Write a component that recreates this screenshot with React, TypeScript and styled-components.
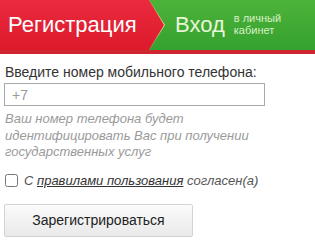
import styled, { createGlobalStyle } from 'styled-components';

const GlobalStyle = createGlobalStyle`
	body {
		margin: 0;
		background: #fff;
		font-family: 'Liberation Sans', Arial, sans-serif;
	}
`;

const Page = styled.div`
	width: 315px;
`;

const Header = styled.header`
	display: flex;
	height: 50px;
	border-bottom: 4px solid #cf2530;
	box-shadow: inset 0 -1px 0 #d9c46a;
`;

const RegisterTab = styled.div`
	position: relative;
	width: 149px;
	display: flex;
	align-items: center;
	padding-left: 8px;
	box-sizing: border-box;
	background: linear-gradient(#ea2a3d, #dc1a2c);
	color: #fff;
	font-size: 22px;
	z-index: 1;
	&::after {
		content: '';
		position: absolute;
		top: 0;
		right: -15px;
		width: 15px;
		height: 50px;
		background: linear-gradient(#ea2a3d, #dc1a2c);
		clip-path: polygon(0 0, 100% 50%, 0 100%);
	}
	&::before {
		content: '';
		position: absolute;
		top: 0;
		right: -16px;
		width: 16px;
		height: 50px;
		background: #e2d98a;
		clip-path: polygon(0 0, 100% 50%, 0 100%);
	}
`;

const LoginTab = styled.div`
	flex: 1;
	display: flex;
	align-items: center;
	gap: 9px;
	padding-left: 26px;
	background: linear-gradient(#4db33a, #35a12f);
	color: #e8f6d8;
`;

const LoginTitle = styled.span`
	font-size: 22px;
`;

const LoginNote = styled.span`
	font-size: 11px;
	line-height: 12px;
	color: #d8efc6;
	margin-top: -2px;
`;

const Form = styled.form`
	padding: 10px 4px 0 4px;
	display: flex;
	flex-direction: column;
`;

const Label = styled.label`
	font-size: 14px;
	color: #333;
	line-height: 16px;
	padding-left: 1px;
`;

const PhoneInput = styled.input`
	margin-top: 3px;
	width: 261px;
	height: 23px;
	box-sizing: border-box;
	border: 1px solid #a9a9a9;
	padding: 0 7px;
	font-family: inherit;
	font-size: 14px;
	color: #333;
	outline: none;
	&::placeholder {
		color: #999;
	}
`;

const Hint = styled.p`
	margin: 5px 0 0 1px;
	width: 250px;
	font-size: 13px;
	line-height: 16.5px;
	font-style: italic;
	color: #9a9a9a;
`;

const AgreeRow = styled.label`
	display: flex;
	align-items: center;
	gap: 6px;
	margin-top: 12px;
	font-size: 13px;
	font-style: italic;
	color: #555;
`;

const CheckBox = styled.input`
	margin: 0 0 0 1px;
	width: 13px;
	height: 13px;
`;

const RulesLink = styled.a`
	color: #333;
	text-decoration: underline;
`;

const SubmitButton = styled.button`
	margin-top: 16px;
	width: 189px;
	height: 33px;
	border: 1px solid #d3d3d3;
	border-radius: 2px;
	background: linear-gradient(#fbfbfb, #e9e9e9);
	font-family: inherit;
	font-size: 14px;
	color: #222;
`;

export default function App() {
	return (
		<Page>
			<GlobalStyle />
			<Header>
				<RegisterTab>Регистрация</RegisterTab>
				<LoginTab>
					<LoginTitle>Вход</LoginTitle>
					<LoginNote>
						в личный
						<br />
						кабинет
					</LoginNote>
				</LoginTab>
			</Header>
			<Form onSubmit={(e) => e.preventDefault()}>
				<Label htmlFor="phone">Введите номер мобильного телефона:</Label>
				<PhoneInput id="phone" type="tel" placeholder="+7" />
				<Hint>
					Ваш номер телефона будет идентифицировать Вас при получении государственных услуг
				</Hint>
				<AgreeRow>
					<CheckBox type="checkbox" />
					<span>
						С <RulesLink href="#">правилами пользования</RulesLink> согласен(а)
					</span>
				</AgreeRow>
				<SubmitButton type="submit">Зарегистрироваться</SubmitButton>
			</Form>
		</Page>
	);
}
